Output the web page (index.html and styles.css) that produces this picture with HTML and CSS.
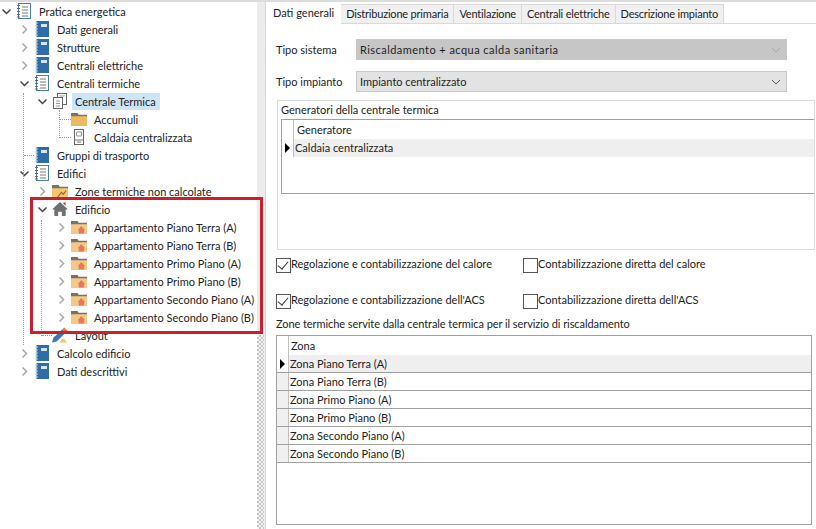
FILE: index.html
```html
<!DOCTYPE html>
<html lang="en">
<head>
  <meta charset="UTF-8">
  <title>Centrale Termica</title>
  <link rel="stylesheet" href="styles.css">
</head>
<body>
  <svg class="defs">
    <symbol id="i-open" viewBox="0 0 9 9"><path d="M.5 2.500l4 4 4-4" fill="none" stroke="#444" stroke-width="1.500"/></symbol>
    <symbol id="i-closed" viewBox="0 0 9 9"><path d="M2.500.5l4 4-4 4" fill="none" stroke="#a8a8a8" stroke-width="1.500"/></symbol>
    <symbol id="i-book" viewBox="0 0 14 16"><rect x="1.500" y="0" width="12.500" height="16" fill="#2f6da8"/><rect x="6" y="3" width="6" height="3" fill="#d5e4f0"/><path d="M0 2h3M0 5h3M0 8h3M0 11h3M0 14h3" stroke="#c4d4df" stroke-width="1"/></symbol>
    <symbol id="i-list" viewBox="0 0 14 16"><rect x="1.500" y=".5" width="12" height="15" fill="#fff" stroke="#4a7ca8"/><path d="M5 4h6M5 7h6M5 10h6M5 13h6" stroke="#777"/><path d="M0 2.500h3M0 5.500h3M0 8.500h3M0 11.500h3M0 14h3" stroke="#666"/></symbol>
    <symbol id="i-pages" viewBox="0 0 14 16"><rect x="4.500" y=".5" width="9" height="11" fill="#fff" stroke="#666"/><rect x=".5" y="4.500" width="9" height="11" fill="#fff" stroke="#666"/><path d="M6.500 3h5M3 8h4M3 10.500h4M3 13h4" stroke="#999"/></symbol>
    <symbol id="i-folder" viewBox="0 0 17 15"><path d="M0 2h7l1.500 2H17v11H0z" fill="#eeb95f"/><path d="M0 1h7l1 2h9v1.500H0z" fill="#77736c"/></symbol>
    <symbol id="i-folder-home" viewBox="0 0 17 15"><path d="M0 2h7l1.500 2H17v11H0z" fill="#f3c985"/><path d="M0 1h7l1 2h9v1.500H0z" fill="#77736c"/><path d="M7 11l4-4.500 4 4.500h-1.200v3.500H8.200V11z" fill="#ee7558"/></symbol>
    <symbol id="i-folder-chart" viewBox="0 0 17 15"><path d="M0 2h7l1.500 2H17v11H0z" fill="#f2c76f"/><path d="M0 1h7l1 2h9v1.500H0z" fill="#77736c"/><path d="M6 14l4-5 2 2 3-4" fill="none" stroke="#b65b35" stroke-width="1.300"/></symbol>
    <symbol id="i-boiler" viewBox="0 0 12 16"><rect x="1.500" y=".5" width="9" height="15" fill="#fff" stroke="#666"/><path d="M3.500 3h5v4h-5z" fill="none" stroke="#999"/><path d="M1.500 11h9M4 13h4" stroke="#777"/></symbol>
    <symbol id="i-house" viewBox="0 0 17 15"><path d="M8.500 0L0 8h2.500v7h4v-4.500h4V15h4V8H17z" fill="#6f6f6f"/><path d="M12 .5h2.500v3.500L12 2z" fill="#a44"/></symbol>
    <symbol id="i-layout" viewBox="0 0 17 16"><path d="M0 16l1.500-5L11 2l3.500 3.500L5 15z" fill="#3c79b4"/><path d="M11 2l2-2 3.500 3.500-2 2z" fill="#e8703a"/><path d="M8 16l3-4h2l3 4z" fill="#f1c272"/></symbol>
  </svg>

  <div class="app">
    <aside class="tree">
      <div class="row"><svg class="twist"><use href="#i-open"/></svg><svg class="ico"><use href="#i-list"/></svg><span>Pratica energetica</span></div>
      <div class="row lv1"><svg class="twist"><use href="#i-closed"/></svg><svg class="ico"><use href="#i-book"/></svg><span>Dati generali</span></div>
      <div class="row lv1"><svg class="twist"><use href="#i-closed"/></svg><svg class="ico"><use href="#i-book"/></svg><span>Strutture</span></div>
      <div class="row lv1"><svg class="twist"><use href="#i-closed"/></svg><svg class="ico"><use href="#i-book"/></svg><span>Centrali elettriche</span></div>
      <div class="row lv1"><svg class="twist"><use href="#i-open"/></svg><svg class="ico"><use href="#i-list"/></svg><span>Centrali termiche</span></div>
      <div class="row lv2"><svg class="twist"><use href="#i-open"/></svg><svg class="ico"><use href="#i-pages"/></svg><span class="sel">Centrale Termica</span></div>
      <div class="row lv3"><span class="twist"></span><svg class="ico"><use href="#i-folder"/></svg><span>Accumuli</span></div>
      <div class="row lv3"><span class="twist"></span><svg class="ico"><use href="#i-boiler"/></svg><span>Caldaia centralizzata</span></div>
      <div class="row lv1"><span class="twist"></span><svg class="ico"><use href="#i-book"/></svg><span>Gruppi di trasporto</span></div>
      <div class="row lv1"><svg class="twist"><use href="#i-open"/></svg><svg class="ico"><use href="#i-list"/></svg><span>Edifici</span></div>
      <div class="row lv2"><svg class="twist"><use href="#i-closed"/></svg><svg class="ico"><use href="#i-folder-chart"/></svg><span>Zone termiche non calcolate</span></div>
      <div class="row lv2"><svg class="twist"><use href="#i-open"/></svg><svg class="ico"><use href="#i-house"/></svg><span>Edificio</span></div>
      <div class="row lv3"><svg class="twist"><use href="#i-closed"/></svg><svg class="ico"><use href="#i-folder-home"/></svg><span>Appartamento Piano Terra (A)</span></div>
      <div class="row lv3"><svg class="twist"><use href="#i-closed"/></svg><svg class="ico"><use href="#i-folder-home"/></svg><span>Appartamento Piano Terra (B)</span></div>
      <div class="row lv3"><svg class="twist"><use href="#i-closed"/></svg><svg class="ico"><use href="#i-folder-home"/></svg><span>Appartamento Primo Piano (A)</span></div>
      <div class="row lv3"><svg class="twist"><use href="#i-closed"/></svg><svg class="ico"><use href="#i-folder-home"/></svg><span>Appartamento Primo Piano (B)</span></div>
      <div class="row lv3"><svg class="twist"><use href="#i-closed"/></svg><svg class="ico"><use href="#i-folder-home"/></svg><span>Appartamento Secondo Piano (A)</span></div>
      <div class="row lv3"><svg class="twist"><use href="#i-closed"/></svg><svg class="ico"><use href="#i-folder-home"/></svg><span>Appartamento Secondo Piano (B)</span></div>
      <div class="row lv2"><span class="twist"></span><svg class="ico"><use href="#i-layout"/></svg><span>Layout</span></div>
      <div class="row lv1"><svg class="twist"><use href="#i-closed"/></svg><svg class="ico"><use href="#i-book"/></svg><span>Calcolo edificio</span></div>
      <div class="row lv1"><svg class="twist"><use href="#i-closed"/></svg><svg class="ico"><use href="#i-book"/></svg><span>Dati descrittivi</span></div>

      <!-- connector dots of the tree -->
      <i class="dots v v1"></i>
      <i class="dots v v2"></i>
      <i class="dots v v3"></i>
      <i class="dots h h1"></i>
      <i class="dots h h2"></i>
      <i class="dots h h3"></i>
      <i class="dots h h4"></i>
      <div class="redbox"></div>
    </aside>

    <div class="splitter"><div class="grip"></div></div>

    <main class="panel">
      <div class="tabs">
        <div class="tab active">Dati generali</div>
        <div class="tab">Distribuzione primaria</div>
        <div class="tab">Ventilazione</div>
        <div class="tab">Centrali elettriche</div>
        <div class="tab">Descrizione impianto</div>
      </div>

      <div class="field">
        <label>Tipo sistema</label>
        <div class="combo disabled">Riscaldamento + acqua calda sanitaria<svg class="arrow" viewBox="0 0 10 6"><path d="M1 1l4 4 4-4" fill="none" stroke="#a8a8a8"/></svg></div>
      </div>
      <div class="field">
        <label>Tipo impianto</label>
        <div class="combo">Impianto centralizzato<svg class="arrow" viewBox="0 0 10 6"><path d="M1 1l4 4 4-4" fill="none" stroke="#555"/></svg></div>
      </div>

      <section class="gen-box">
        <div class="gen-title">Generatori della centrale termica</div>
        <div class="grid gen-grid">
          <div class="grow head"><div class="gutter"></div><div class="cell">Generatore</div></div>
          <div class="grow cur"><div class="gutter"><i class="marker"></i></div><div class="cell">Caldaia centralizzata</div></div>
        </div>
      </section>

      <div class="checks">
        <div class="check on">Regolazione e contabilizzazione del calore</div>
        <div class="check">Contabilizzazione diretta del calore</div>
      </div>
      <div class="checks second">
        <div class="check on">Regolazione e contabilizzazione dell'ACS</div>
        <div class="check">Contabilizzazione diretta dell'ACS</div>
      </div>

      <div class="zone-title">Zone termiche servite dalla centrale termica per il servizio di riscaldamento</div>
      <div class="grid zone-grid">
        <div class="grow head"><div class="gutter"></div><div class="cell">Zona</div></div>
        <div class="grow cur line"><div class="gutter"><i class="marker"></i></div><div class="cell">Zona Piano Terra (A)</div></div>
        <div class="grow line"><div class="gutter"></div><div class="cell">Zona Piano Terra (B)</div></div>
        <div class="grow line"><div class="gutter"></div><div class="cell">Zona Primo Piano (A)</div></div>
        <div class="grow line"><div class="gutter"></div><div class="cell">Zona Primo Piano (B)</div></div>
        <div class="grow line"><div class="gutter"></div><div class="cell">Zona Secondo Piano (A)</div></div>
        <div class="grow line"><div class="gutter"></div><div class="cell">Zona Secondo Piano (B)</div></div>
      </div>
    </main>
  </div>
</body>
</html>
```

FILE: styles.css
```css
* {
  box-sizing: border-box;
}

body {
  margin: 0;
  background-color: #fff;
  font-family: Lato, "Liberation Sans", sans-serif;
  font-size: 11px;
  color: #222;
  overflow: hidden;
}

.defs {
  display: none;
}

.app {
  display: flex;
  width: 816px;
  height: 529px;
  border-top: 2px solid #dcdcdc;
}

/* tree */
.tree {
  position: relative;
  width: 257px;
  background-color: #fff;
}

.row {
  display: flex;
  align-items: center;
  height: 18px;
  padding-left: 2px;
  white-space: nowrap;
}

.lv1 { padding-left: 20px; }
.lv2 { padding-left: 38px; }
.lv3 { padding-left: 57px; }

.twist {
  width: 9px;
  height: 9px;
  flex: none;
}

.ico {
  width: 16px;
  height: 16px;
  margin-left: 5px;
  margin-right: 5px;
  flex: none;
}

.row span:last-child {
  padding: 2px 3px 2px 2px;
}

.row span.sel {
  background-color: #cde6f7;
  padding: 2px 4px 2px 3px;
  margin-left: -1px;
}

.dots {
  position: absolute;
}

.dots.v {
  width: 0;
  border-left: 1px dotted #999;
}

.dots.h {
  height: 0;
  border-top: 1px dotted #999;
}

.v1 { left: 23px; top: 91px; height: 252px; }
.v2 { left: 59px; top: 108px; height: 28px; }
.v3 { left: 41px; top: 218px; height: 116px; }
.h1 { left: 60px; top: 117px; width: 11px; }
.h2 { left: 60px; top: 135px; width: 11px; }
.h3 { left: 24px; top: 153px; width: 10px; }
.h4 { left: 42px; top: 333px; width: 10px; }

.redbox {
  position: absolute;
  left: 30px;
  top: 195px;
  width: 233px;
  height: 137px;
  border: 3px solid #c8202f;
}

.splitter {
  display: flex;
  flex-direction: column;
  justify-content: flex-end;
  width: 9px;
  background-color: #ececec;
  border-right: 1px solid #d8d8d8;
}

.grip {
  width: 7px;
  height: 194px;
  background: repeating-conic-gradient(#c2c2c2 0 25%, #f6f6f6 0 50%) 0 0 / 4px 4px;
}

/* right panel */
.panel {
  flex: 1;
  min-width: 0;
}

.tabs {
  display: flex;
  align-items: flex-end;
  height: 22px;
  border-bottom: 1px solid #d9d9d9;
}

.tab {
  height: 19px;
  line-height: 18px;
  padding: 0 5px;
  background-color: #f0f0f0;
  border: 1px solid #d9d9d9;
  border-bottom: none;
  margin-left: -1px;
  letter-spacing: -0.2px;
}

.tab.active {
  position: relative;
  top: 1px;
  height: 21px;
  margin-left: 0;
  padding: 0 6px 2px;
  background-color: #fff;
  border-color: #fff;
  letter-spacing: 0;
}

.field {
  display: flex;
  align-items: center;
  margin-top: 15px;
  padding-left: 10px;
}

.field + .field {
  margin-top: 11px;
}

.field label {
  width: 80px;
  flex: none;
}

.combo {
  position: relative;
  width: 431px;
  height: 21px;
  line-height: 20px;
  padding-left: 3px;
  background-color: #e3e3e3;
  border: 1px solid #c8c8c8;
}

.combo.disabled {
  background-color: #c6c6c6;
  border-color: #c6c6c6;
  letter-spacing: 0.45px;
}

.arrow {
  position: absolute;
  right: 5px;
  top: 7px;
  width: 10px;
  height: 6px;
}

.gen-box {
  height: 150px;
  margin: 8px 1px 0 11px;
  padding-top: 0;
  border: 1px solid #dcdcdc;
}

.gen-title {
  height: 18px;
  line-height: 17px;
  padding-left: 3px;
}

.grid {
  border: 1px solid #a0a0a0;
  background-color: #fff;
}

.gen-grid {
  height: 75px;
  margin-left: 3px;
  border-right: none;
}

.grow {
  display: flex;
  height: 18px;
}

.gutter {
  display: flex;
  flex: none;
  align-items: center;
  justify-content: center;
  width: 12px;
  background-color: #f0f0f0;
  border-right: 1px solid #c0c0c0;
}

.head .gutter,
.cur .gutter {
  background-color: #fff;
}

.grow.head {
  height: 19px;
}

.cell {
  flex: 1;
  line-height: 18px;
  padding-left: 1px;
}

.head .cell {
  padding-left: 2px;
  line-height: 19px;
}

.gen-grid .head .cell {
  padding-left: 3px;
}

.cur .cell {
  background-color: #efefef;
}

.marker {
  width: 0;
  height: 0;
  border-top: 5px solid transparent;
  border-bottom: 5px solid transparent;
  border-left: 5px solid #000;
}

.checks {
  display: flex;
  align-items: center;
  height: 16px;
  margin: 5px 0 0 10px;
}

.checks.second {
  margin-top: 20px;
}

.check {
  position: relative;
  width: 247px;
  padding-left: 15px;
}

.check::before {
  content: "";
  position: absolute;
  left: 0;
  top: 1px;
  width: 13px;
  height: 13px;
  border: 1px solid #555;
  background-color: #fff;
}

.check.on::after {
  content: "";
  position: absolute;
  left: 4px;
  top: 2px;
  width: 5px;
  height: 9px;
  border: solid #333;
  border-width: 0 1px 1px 0;
  transform: rotate(40deg);
}

.zone-title {
  height: 18px;
  margin: 10px 0 0 10px;
  letter-spacing: -0.07px;
}

.zone-grid {
  width: 536px;
  height: 190px;
  margin-left: 10px;
}

.grow.line {
  border-bottom: 1px solid #a0a0a0;
}
```
